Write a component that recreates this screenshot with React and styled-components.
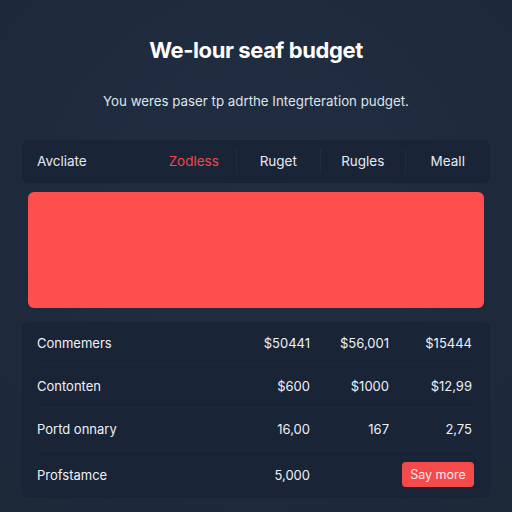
import styled, { createGlobalStyle } from "styled-components";

const Global = createGlobalStyle`
  *, *::before, *::after {
    box-sizing: border-box;
  }
  body {
    margin: 0;
    background: #1e2a3d;
    font-family: Inter, "Open Sans", sans-serif;
    color: #eef1f6;
  }
`;

const Page = styled.main`
  width: 512px;
  height: 512px;
  padding: 0 22px;
  background: radial-gradient(circle at 50% 40%, #212e42 0%, #1d2839 100%);
  display: flex;
  flex-direction: column;
`;

const Title = styled.h1`
  margin: 37px 0 0;
  font-size: 22px;
  line-height: 27px;
  font-weight: 700;
  text-align: center;
  letter-spacing: -0.4px;
  color: #ffffff;
`;

const Subtitle = styled.p`
  margin: 29px 0 0;
  font-size: 13.3px;
  line-height: 16px;
  text-align: center;
  color: #dfe3ea;
`;

const Card = styled.section`
  background: #1a2437;
  border-radius: 6px;
`;

const Tabs = styled(Card)`
  margin-top: 31px;
  height: 43px;
  display: grid;
  grid-template-columns: 130px repeat(4, 1fr);
  align-items: center;
`;

const Tab = styled.div`
  font-size: 13.5px;
  color: ${p => (p.$active ? "#f0484b" : "#e6e9ef")};
  text-align: ${p => (p.$left ? "left" : "center")};
  padding-left: ${p => (p.$left ? "15px" : "0")};
  height: 25px;
  line-height: 25px;
  border-right: ${p => (p.$divider ? "1px solid #222d40" : "none")};
`;

const Banner = styled.div`
  margin: 9px 6px 0;
  height: 116px;
  border-radius: 6px;
  background: #fe4e4d;
`;

const Table = styled(Card)`
  margin-top: 14px;
  height: 176px;
  display: flex;
  flex-direction: column;
`;

const Row = styled.div`
  height: 43px;
  flex: ${p => (p.$last ? "1" : "none")};
  margin: 0 18px 0 15px;
  display: grid;
  grid-template-columns: 1fr 90px 79px 83px;
  align-items: center;
  font-size: 13px;
  color: #eef1f6;
  border-bottom: ${p => (p.$last ? "none" : "1px solid #1e293b")};
`;

const Cell = styled.div`
  text-align: ${p => (p.$left ? "left" : "right")};
`;

const Button = styled.button`
  justify-self: end;
  width: 72px;
  height: 25px;
  margin-right: -2px;
  border: 0;
  border-radius: 4px;
  background: #f54a4c;
  color: #fde8e8;
  font-family: Inter, sans-serif;
  font-size: 12.5px;
  cursor: pointer;
`;

const rows = [
  ["Conmemers", "$50441", "$56,001", "$15444"],
  ["Contonten", "$600", "$1000", "$12,99"],
  ["Portd onnary", "16,00", "167", "2,75"],
];

export default function App() {
  return (
    <Page>
      <Global />
      <Title>We-lour seaf budget</Title>
      <Subtitle>You weres paser tp adrthe Integrteration pudget.</Subtitle>
      <Tabs>
        <Tab $left>Avcliate</Tab>
        <Tab $active $divider>Zodless</Tab>
        <Tab $divider>Ruget</Tab>
        <Tab $divider>Rugles</Tab>
        <Tab>Meall</Tab>
      </Tabs>
      <Banner />
      <Table>
        {rows.map(r => (
          <Row key={r[0]}>
            <Cell $left>{r[0]}</Cell>
            <Cell>{r[1]}</Cell>
            <Cell>{r[2]}</Cell>
            <Cell>{r[3]}</Cell>
          </Row>
        ))}
        <Row $last>
          <Cell $left>Profstamce</Cell>
          <Cell>5,000</Cell>
          <Cell />
          <Button>Say more</Button>
        </Row>
      </Table>
    </Page>
  );
}
